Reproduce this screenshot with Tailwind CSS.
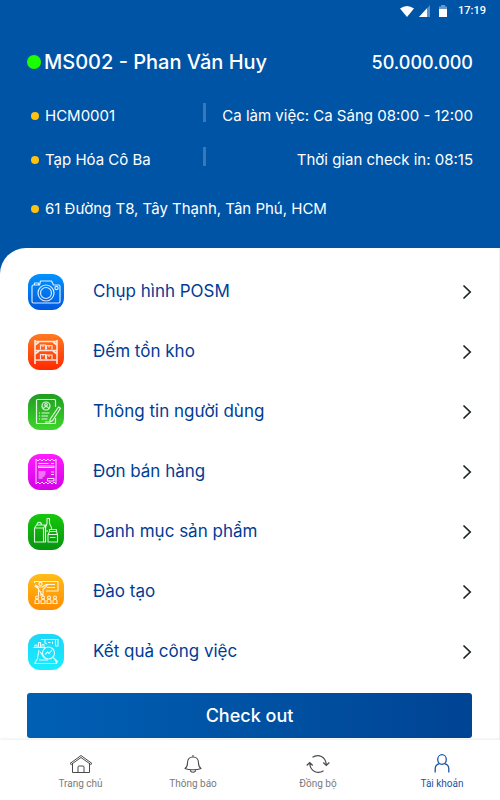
<!DOCTYPE html>
<html lang="vi">
<head>
    <meta charset="UTF-8">
    <meta name="viewport" content="width=device-width, initial-scale=1.0">
    <title>Tài khoản</title>
    <script src="https://cdn.jsdelivr.net/npm/@tailwindcss/browser@4"></script>
</head>
<body class="min-h-screen flex flex-col bg-[#0054a6] font-['Inter','Noto_Sans',sans-serif]">
    <header class="text-white pb-[26px]">
        <!-- Status bar -->
        <div class="flex items-center justify-end h-[22px] pr-[14px] font-['Roboto',sans-serif]">
            <svg class="w-[14px] h-[11px]" viewBox="0 0 14 11" fill="currentColor"><path d="M0 2.6Q7-2.4 14 2.6L7 11z"/></svg>
            <svg class="w-[11px] h-[12px] ml-[5px]" viewBox="0 0 11 12" fill="currentColor"><path d="M0 12 11 0v12z" opacity=".35"/><path d="M0 12 8 3.3V12z"/></svg>
            <svg class="w-[8px] h-[12px] ml-[9px]" viewBox="0 0 8 12" fill="currentColor"><path d="M0 1.5h2V0h4v1.5h2V5H0z" opacity=".4"/><path d="M0 4h8v8H0z"/></svg>
            <span class="ml-[11px] text-[11px] font-medium">17:19</span>
        </div>

        <div class="flex items-center justify-between h-[30px] mt-[25px] px-[27px] font-medium">
            <div class="flex items-center gap-[3px]">
                <span class="size-[14px] rounded-full bg-[#1cff00]"></span>
                <h1 class="text-[20px]">MS002 - Phan Văn Huy</h1>
            </div>
            <span class="text-[18px]">50.000.000</span>
        </div>

        <div class="flex flex-col gap-[18px] mt-[26px] pl-[31px] pr-[27px] text-[15px]">
            <div class="flex items-center h-[26px]">
                <span class="size-[8px] rounded-full bg-[#ffc20e]"></span>
                <span class="w-[158px] ml-[6px]">HCM0001</span>
                <span class="self-start w-[3px] h-[19px] bg-[#3877b9]"></span>
                <span class="flex-1 text-right whitespace-nowrap">Ca làm việc: Ca Sáng 08:00 - 12:00</span>
            </div>
            <div class="flex items-center h-[26px]">
                <span class="size-[8px] rounded-full bg-[#ffc20e]"></span>
                <span class="w-[158px] ml-[6px]">Tạp Hóa Cô Ba</span>
                <span class="self-start w-[3px] h-[19px] bg-[#3877b9]"></span>
                <span class="flex-1 text-right whitespace-nowrap">Thời gian check in: 08:15</span>
            </div>
            <div class="flex items-center h-[26px] mt-[5px]">
                <span class="size-[8px] rounded-full bg-[#ffc20e]"></span>
                <span class="ml-[6px]">61 Đường T8, Tây Thạnh, Tân Phú, HCM</span>
            </div>
        </div>
    </header>

    <main class="flex-1 bg-white rounded-tl-[26px] border-r border-[#f0f0f0] pt-[14px]">
        <nav class="flex flex-col text-[17px] text-[#003c96]">
            <a href="#" class="flex items-center h-[60px] pl-[28px] pr-[27px]">
                <svg class="size-[36px]" viewBox="0 0 36 36" fill="none" stroke="#fff" stroke-opacity=".85" stroke-width="1.2" stroke-linejoin="round">
                    <defs><linearGradient id="g1" x2="0" y2="1"><stop stop-color="#0093ff"/><stop offset="1" stop-color="#0058de"/></linearGradient></defs>
                    <rect width="36" height="36" rx="12" fill="url(#g1)" stroke="none"/>
                    <path d="M5.500 11h6L12.500 7h11l2 4h5a1.500 1.500 0 0 1 1.500 1.500v15a1.500 1.500 0 0 1-1.500 1.500h-25A1.500 1.500 0 0 1 4 27.500v-15A1.500 1.500 0 0 1 5.500 11z"/>
                    <path d="M6.500 11V9h4v2"/>
                    <circle cx="18" cy="19" r="8"/><circle cx="18" cy="19" r="5.5"/><circle cx="28.5" cy="14" r="1.6"/>
                </svg>
                <span class="ml-[29px]">Chụp hình POSM</span>
                <svg class="w-[10px] h-[16px] ml-auto" viewBox="0 0 10 16" fill="none" stroke="#1c2426" stroke-width="1.7"><path d="M1.500 1.500 8.200 8l-6.700 6.500"/></svg>
            </a>
            <a href="#" class="flex items-center h-[60px] pl-[28px] pr-[27px]">
                <svg class="size-[36px]" viewBox="0 0 36 36" fill="none" stroke="#fff" stroke-opacity=".85" stroke-width="1.2">
                    <defs><linearGradient id="g2" x2="0" y2="1"><stop stop-color="#ff7a22"/><stop offset="1" stop-color="#ff2900"/></linearGradient></defs>
                    <rect width="36" height="36" rx="12" fill="url(#g2)" stroke="none"/>
                    <path d="M7 6v24M29 6v24M7 7.500h22M7 16.500h22M7 26h22M7 11l4-3M29 11l-4-3M7 20l4-3M29 20l-4-3" stroke-width="1.6"/>
                    <path d="M12.500 15.500V11h5v4.500M18.500 15.500v-4h5.500v4M12.500 25v-4.500h5V25M18.500 25v-4h5.500v4M15 11v2M21 11.500v2M15 20.500v2M21 21v2"/>
                </svg>
                <span class="ml-[29px]">Đếm tồn kho</span>
                <svg class="w-[10px] h-[16px] ml-auto" viewBox="0 0 10 16" fill="none" stroke="#1c2426" stroke-width="1.7"><path d="M1.500 1.500 8.200 8l-6.700 6.500"/></svg>
            </a>
            <a href="#" class="flex items-center h-[60px] pl-[28px] pr-[27px]">
                <svg class="size-[36px]" viewBox="0 0 36 36" fill="none" stroke="#fff" stroke-opacity=".85" stroke-width="1.2" stroke-linejoin="round">
                    <defs><linearGradient id="g3" x2="0" y2="1"><stop stop-color="#1f9d20"/><stop offset="1" stop-color="#3fd52c"/></linearGradient></defs>
                    <rect width="36" height="36" rx="12" fill="url(#g3)" stroke="none"/>
                    <path d="M27.500 13V6.500a1 1 0 0 0-1-1h-17a1 1 0 0 0-1 1v22a1 1 0 0 0 1 1h17a1 1 0 0 0 1-1V24"/>
                    <circle cx="18" cy="12" r="4"/><circle cx="18" cy="10.800" r="1.300"/><path d="M15.300 14.700c.5-2.600 4.900-2.600 5.400 0"/>
                    <path d="M11 19h1M13.500 19h8M11 22h1M13.500 22H20M11 25h1M13.500 25h6"/>
                    <path d="m30.500 13 2 1.300-7.800 12.200-3 1.800.6-3.300zM17 28h4"/>
                </svg>
                <span class="ml-[29px]">Thông tin người dùng</span>
                <svg class="w-[10px] h-[16px] ml-auto" viewBox="0 0 10 16" fill="none" stroke="#1c2426" stroke-width="1.7"><path d="M1.500 1.500 8.200 8l-6.700 6.500"/></svg>
            </a>
            <a href="#" class="flex items-center h-[60px] pl-[28px] pr-[27px]">
                <svg class="size-[36px]" viewBox="0 0 36 36" fill="none" stroke="#fff" stroke-opacity=".85" stroke-linejoin="round">
                    <defs><linearGradient id="g4" x2="0" y2="1"><stop stop-color="#ff1cff"/><stop offset="1" stop-color="#d400e6"/></linearGradient></defs>
                    <rect width="36" height="36" rx="12" fill="url(#g4)" stroke="none"/>
                    <path d="M8 5l2 2 2-2 2 2 2-2 2 2 2-2 2 2 2-2 2 2 2-2v25l-2-2-2 2-2-2-2 2-2-2-2 2-2-2-2 2-2-2-2 2z"/>
                    <path d="M10.500 9.500h10M23 9.500h3M10.500 12h15.500v1.500H10.500zM10.500 18h7M10.500 20h7M10.500 22h6M10.500 24h4M23 18h3M23 20.500h3M19.500 24.500H26V27h-6.500z"/>
                </svg>
                <span class="ml-[29px]">Đơn bán hàng</span>
                <svg class="w-[10px] h-[16px] ml-auto" viewBox="0 0 10 16" fill="none" stroke="#1c2426" stroke-width="1.7"><path d="M1.500 1.500 8.200 8l-6.700 6.500"/></svg>
            </a>
            <a href="#" class="flex items-center h-[60px] pl-[28px] pr-[27px]">
                <svg class="size-[36px]" viewBox="0 0 36 36" fill="none" stroke="#fff" stroke-opacity=".85" stroke-width="1.1" stroke-linejoin="round">
                    <defs><linearGradient id="g5" x2="0" y2="1"><stop stop-color="#16c80b"/><stop offset="1" stop-color="#079410"/></linearGradient></defs>
                    <rect width="36" height="36" rx="12" fill="url(#g5)" stroke="none"/>
                    <path d="M6.500 14h9v14h-9zM6.500 14l2-3h9l-2 3M15.500 14l2-3v17h-2M9 11c0-3.500 4.500-3.500 4.500 0"/>
                    <path d="M17.500 28V14c0-2 1.500-3 1.500-5V4.500h2.500V9c0 2 2 3 2 5v1.500M17.500 17H20"/>
                    <path d="M20 20.500h9.500V28H20zM20 20.500l1.500-3h7l1 3M21.500 17.500v-2h7v2M22 23.500h5.500"/>
                </svg>
                <span class="ml-[29px]">Danh mục sản phẩm</span>
                <svg class="w-[10px] h-[16px] ml-auto" viewBox="0 0 10 16" fill="none" stroke="#1c2426" stroke-width="1.7"><path d="M1.500 1.500 8.200 8l-6.700 6.500"/></svg>
            </a>
            <a href="#" class="flex items-center h-[60px] pl-[28px] pr-[27px]">
                <svg class="size-[36px]" viewBox="0 0 36 36" fill="none" stroke="#fff" stroke-opacity=".85" stroke-width="1.1" stroke-linejoin="round">
                    <defs><linearGradient id="g6" x2="0" y2="1"><stop stop-color="#ffbd1b"/><stop offset="1" stop-color="#ff8c00"/></linearGradient></defs>
                    <rect width="36" height="36" rx="12" fill="url(#g6)" stroke="none"/>
                    <path d="M6.500 9V7.500H30v9.500H18M18 10.500h9M19 13.500h8"/>
                    <circle cx="12.500" cy="10" r="1.600"/>
                    <path d="M6.500 12l4 2.500V22M15 22v-6.500l4-4-1-1-3.500 2.500h-4L7.500 11zM12.800 17v5"/>
                    <circle cx="9" cy="23.500" r="1.500"/><circle cx="15" cy="23.500" r="1.500"/><circle cx="21" cy="23.500" r="1.500"/><circle cx="27" cy="23.500" r="1.500"/>
                    <path d="M7 29.500v-3q2-2.500 4 0v3zM13 29.500v-3q2-2.500 4 0v3zM19 29.500v-3q2-2.500 4 0v3zM25 29.500v-3q2-2.500 4 0v3z"/>
                </svg>
                <span class="ml-[29px]">Đào tạo</span>
                <svg class="w-[10px] h-[16px] ml-auto" viewBox="0 0 10 16" fill="none" stroke="#1c2426" stroke-width="1.7"><path d="M1.500 1.500 8.200 8l-6.700 6.500"/></svg>
            </a>
            <a href="#" class="flex items-center h-[60px] pl-[28px] pr-[27px]">
                <svg class="size-[36px]" viewBox="0 0 36 36" fill="none" stroke="#fff" stroke-opacity=".85" stroke-width="1.1" stroke-linejoin="round">
                    <defs><linearGradient id="g7" x2="0" y2="1"><stop stop-color="#1cd6f8"/><stop offset="1" stop-color="#19edff"/></linearGradient></defs>
                    <rect width="36" height="36" rx="12" fill="url(#g7)" stroke="none"/>
                    <path d="M5.500 13.500h12M7 13.500V11h2v2.500M10.500 13.500v-5h2v5M14 13.500v-3h2v3"/>
                    <path d="M13 5.500h14.500V12M17 5.500V9l2 1M20 8.500h2.500M24.500 7.500V10M27.500 5.500H30V12h-2.500"/>
                    <path d="M11 16l-1.500 8M7 29.500h22M10 24l-3.500 5.500M29 29.500 27 26M11 26h9"/>
                    <circle cx="20.500" cy="19" r="6"/><path d="m25 23.500 5 4.500M17 20.500l2.500-2.500 1.500 1.500 3-3.500M12 18c2 1 2 4 5 6"/>
                </svg>
                <span class="ml-[29px]">Kết quả công việc</span>
                <svg class="w-[10px] h-[16px] ml-auto" viewBox="0 0 10 16" fill="none" stroke="#1c2426" stroke-width="1.7"><path d="M1.500 1.500 8.200 8l-6.700 6.500"/></svg>
            </a>
        </nav>
        <div class="px-[27px] pt-[11px] pb-[2px]">
            <button class="block w-full h-[45px] rounded-[3px] bg-linear-to-r from-[#0060b4] to-[#004494] text-white text-[18px] font-medium">Check out</button>
        </div>
    </main>

    <footer class="sticky bottom-0 h-[60px] bg-white shadow-[0_-1px_3px_rgba(0,0,0,0.08)]">
        <nav class="grid grid-cols-[113fr_112fr_138fr_110fr] h-full pl-[24px] pr-[3px] pt-[14px] font-['Roboto',sans-serif] text-[10px] leading-[14px] text-[#7a7a7a]">
            <a href="#" class="flex flex-col items-center gap-[3px]">
                <svg class="w-[24px] h-[20px]" viewBox="0 0 24 20" fill="none" stroke="#4a4a4a" stroke-linejoin="round"><path d="M3.500 9v9.500h17V9M1 9.500l11-8 11 8-1.200 1L12 3.500l-9.800 7zM9 18.500V13a1 1 0 0 1 1-1h4a1 1 0 0 1 1 1v5.500"/></svg>
                <span>Trang chủ</span>
            </a>
            <a href="#" class="flex flex-col items-center gap-[3px]">
                <svg class="w-[24px] h-[20px]" viewBox="0 0 24 20" fill="none" stroke="#4a4a4a" stroke-width="1.1" stroke-linejoin="round"><path d="M12 1v2M12 3c-4 0-5.500 2.800-5.500 6 0 3.500-1 4.500-2.500 5.500 4 1.700 12 1.700 16 0-1.500-1-2.500-2-2.500-5.500 0-3.200-1.500-6-5.500-6zM9.300 16c.3 3 5.100 3 5.400 0"/></svg>
                <span>Thông báo</span>
            </a>
            <a href="#" class="flex flex-col items-center gap-[3px]">
                <svg class="w-[24px] h-[20px]" viewBox="0 0 24 20" fill="none" stroke="#4a4a4a" stroke-width="1.2"><path d="M6.500 3.300C12-.5 20 2.500 20.300 11M17.300 8.500l3 3 3-3M17.500 16.700C12 20.500 4 17.500 3.700 9M.7 11.500l3-3 3 3"/></svg>
                <span>Đồng bộ</span>
            </a>
            <a href="#" class="flex flex-col items-center gap-[3px] text-[#1c54a5]" aria-current="page">
                <svg class="w-[24px] h-[20px]" viewBox="0 0 24 20" fill="none" stroke="currentColor" stroke-width="1.3"><ellipse cx="12" cy="5.500" rx="4.300" ry="4.800"/><path d="M5.200 18.500V15c0-3 1.800-4.700 4.300-5.300M18.800 18.500V15c0-3-1.800-4.700-4.300-5.300"/></svg>
                <span>Tài khoản</span>
            </a>
        </nav>
    </footer>
</body>
</html>
